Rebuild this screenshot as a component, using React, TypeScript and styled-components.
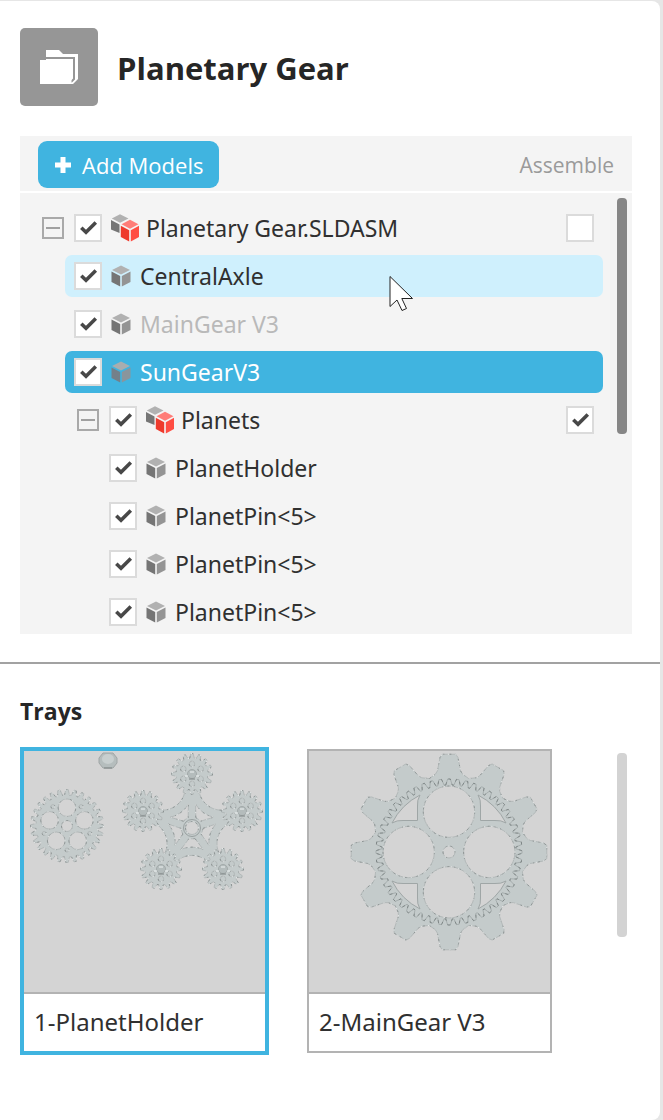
import React from "react";
import styled, { createGlobalStyle, css } from "styled-components";

const GlobalStyle = createGlobalStyle`
  *, *::before, *::after { box-sizing: border-box; }
  body {
    margin: 0;
    background: #e6e6e6;
    color: #262626;
    font-family: "Open Sans", "Noto Sans", sans-serif;
  }
`;

const Panel = styled.main`
  min-height: calc(100vh - 1px);
  margin: 1px 3px 0 0;
  background: #fff;
  border-radius: 0 8px 8px 0;
`;

const Header = styled.header`
  display: flex;
  align-items: center;
  gap: 19px;
  padding: 27px 28px 30px 20px;
`;

const ProjectBadge = styled.span`
  display: grid;
  flex: none;
  width: 78px;
  height: 78px;
  border-radius: 5px;
  background: #969696;
`;

const Title = styled.h1`
  margin: 0;
  padding-top: 2px;
  font-size: 31px;
  line-height: 40px;
  font-weight: 700;
`;

const Models = styled.section`
  margin: 0 28px 28px 20px;
  background: #f4f4f4;
`;

const Toolbar = styled.div`
  display: flex;
  align-items: center;
  justify-content: space-between;
  height: 57px;
  padding: 2px 18px 0;
  border-bottom: 2px solid #fff;
  color: #9a9a9a;
  font-size: 21px;
`;

const AddButton = styled.button`
  display: flex;
  align-items: center;
  gap: 10px;
  height: 47px;
  padding: 0 16px;
  border: 0;
  border-radius: 9px;
  background: #40b4e0;
  color: #fff;
  font: inherit;
  font-size: 22px;
`;

const TreeArea = styled.div`
  display: flex;
  gap: 14px;
  padding: 5px 5px 1px 0;
`;

const Tree = styled.ul`
  display: flex;
  flex: 1;
  flex-direction: column;
  gap: 6px;
  min-width: 0;
  margin: 0;
  padding: 9px 0 0;
  list-style: none;
  color: #303030;
  font-family: "Noto Sans", "Open Sans", sans-serif;
`;

const ScrollThumb = styled.div<{ $length: number; $color: string }>`
  flex: none;
  width: 10px;
  height: ${(p) => p.$length}px;
  border-radius: 4px;
  background: ${(p) => p.$color};
`;

type RowState = "normal" | "hover" | "muted" | "selected";

const rowLook = {
  normal: css``,
  hover: css`background: #cff0fd;`,
  muted: css`color: #b9b9b9;`,
  selected: css`background: #40b4e0; color: #fff;`,
};

const Row = styled.li<{ $level: number; $folder: boolean; $state: RowState }>`
  position: relative;
  display: flex;
  align-items: center;
  gap: 9px;
  height: 42px;
  margin-left: ${(p) => (p.$folder ? 22 : 10) + p.$level * 35}px;
  padding: 0 9px 0 ${(p) => (p.$folder ? 0 : 9)}px;
  border-radius: 7px;
  ${(p) => rowLook[p.$state]}
`;

const RowLabel = styled.label`
  display: flex;
  flex: 1;
  align-items: center;
  gap: 7px;
  font-size: 23px;
  line-height: 30px;
  white-space: nowrap;
`;

const Toggle = styled.button`
  display: grid;
  flex: none;
  place-items: center;
  width: 22px;
  height: 22px;
  margin-right: 1px;
  padding: 0;
  border: 2px solid #a9a9a9;
  background: transparent;

  &::before {
    content: "";
    width: 14px;
    height: 2px;
    background: #a0a0a0;
  }
`;

const Tick = styled.span`
  display: grid;
  flex: none;
  width: 28px;
  height: 28px;

  > * { grid-area: 1 / 1; }
  > svg { pointer-events: none; visibility: hidden; }
  > input:checked + svg { visibility: visible; }
`;

const TickBox = styled.input`
  appearance: none;
  width: 28px;
  height: 28px;
  margin: 0;
  border: 2px solid #dbdbdb;
  background: #fff;
`;

const Pointer = styled.svg`
  position: absolute;
  left: 324px;
  top: 20px;
`;

const Trays = styled.section`
  padding: 30px 33px 65px 20px;
  border-top: 2px solid #a2a2a2;
`;

const TraysTitle = styled.h2`
  margin: 0 0 21px;
  font-size: 23px;
  line-height: 34px;
  font-weight: 700;
`;

const TrayArea = styled.div`
  display: flex;
  gap: 65px;
`;

const TrayGrid = styled.div`
  display: grid;
  flex: 1;
  grid-template-columns: 1fr 1fr;
  gap: 40px;
  padding-left: 2px;
`;

const TrayCard = styled.button<{ $selected?: boolean }>`
  display: flex;
  flex-direction: column;
  padding: 0;
  border: 2px solid ${(p) => (p.$selected ? "#40b4e0" : "#b3b3b3")};
  outline: ${(p) => (p.$selected ? "2px solid #40b4e0" : "none")};
  background: #fff;
  color: #303030;
  font: inherit;
  font-family: "Noto Sans", "Open Sans", sans-serif;
  text-align: left;

  > svg { display: block; width: 100%; background: #d4d4d4; }
`;

const TrayName = styled.span`
  align-self: stretch;
  padding: 13px 10px 14px;
  border-top: 2px solid #b3b3b3;
  font-size: 24px;
  line-height: 30px;
  white-space: nowrap;
`;

const TrayThumbSlot = styled.div`
  padding-top: 4px;
`;

function FolderIcon() {
  return (
    <svg viewBox="0 0 78 78" aria-hidden="true">
      <path d="M26 22h13l4 4h15v25l-5 5h-2V32H26z" fill="#fff" />
      <path d="M26 30H54V51l-3 3" fill="none" stroke="#969696" strokeWidth="2" />
      <path d="M20 32h31.500v24H20z" fill="#fff" />
    </svg>
  );
}

function PlusIcon() {
  return (
    <svg width="18" height="18" viewBox="0 0 18 18" aria-hidden="true">
      <path d="M9 1v16M1 9h16" stroke="#fff" strokeWidth="5" />
    </svg>
  );
}

function PartIcon({ dimmed }: { dimmed?: boolean }) {
  return (
    <svg width="22" height="22" viewBox="0 0 22 22" aria-hidden="true">
      <path d="M10 0.500 19 5 10 9.500 1 5z" fill={dimmed ? "#a9adaf" : "#b1b1b1"} />
      <path d="M0.500 6.500 9.200 11v10.500L0.500 17z" fill={dimmed ? "#74808a" : "#757575"} />
      <path d="M19.500 6.500 10.800 11v10.500L19.500 17z" fill={dimmed ? "#8a959c" : "#949494"} />
    </svg>
  );
}

function AssemblyIcon() {
  return (
    <svg width="28" height="28" viewBox="0 0 28 28" aria-hidden="true">
      <path d="M9 0.300 17.500 4.500 9 8.800 0.800 4.500z" fill="#b1b1b1" />
      <path d="M0 6 8.500 10.500V19L0 15.500z" fill="#757575" />
      <path d="M19 5.800 27.500 10.300 19 14.800 10.500 10.300z" fill="#ff7d78" />
      <path d="M9.800 11.800 18.200 16.200V27.500L9.800 23z" fill="#ee3a2c" />
      <path d="M28 11.800 19.800 16.200V27.500L28 23z" fill="#ff4d43" />
    </svg>
  );
}

function Check({ id, label, on }: { id?: string; label?: string; on: boolean }) {
  return (
    <Tick>
      <TickBox type="checkbox" id={id} aria-label={label} defaultChecked={on} />
      <svg width="28" height="28" viewBox="0 0 28 28" aria-hidden="true">
        <path d="M7.300 13.800 12 18.200 21.800 8.500" fill="none" stroke="#484848" strokeWidth="3.600" />
      </svg>
    </Tick>
  );
}

type Item = {
  name: string;
  level: number;
  folder?: boolean;
  state?: RowState;
  assemble?: boolean;
};

const items: Item[] = [
  { name: "Planetary Gear.SLDASM", level: 0, folder: true, assemble: false },
  { name: "CentralAxle", level: 1, state: "hover" },
  { name: "MainGear V3", level: 1, state: "muted" },
  { name: "SunGearV3", level: 1, state: "selected" },
  { name: "Planets", level: 1, folder: true, assemble: true },
  { name: "PlanetHolder", level: 2 },
  { name: "PlanetPin<5>", level: 2 },
  { name: "PlanetPin<5>", level: 2 },
  { name: "PlanetPin<5>", level: 2 },
];

function TreeRow({ item, index }: { item: Item; index: number }) {
  const { name, level, folder = false, state = "normal", assemble } = item;
  const id = `model-${index}`;
  return (
    <Row $level={level} $folder={folder} $state={state}>
      {folder && <Toggle type="button" aria-label={`Collapse ${name}`} />}
      <Check id={id} on />
      <RowLabel htmlFor={id}>
        {folder ? <AssemblyIcon /> : <PartIcon dimmed={state === "selected"} />}
        {name}
      </RowLabel>
      {assemble !== undefined && <Check label={`Assemble ${name}`} on={assemble} />}
      {state === "hover" && (
        <Pointer width="26" height="38" viewBox="0 0 26 38" aria-hidden="true">
          <path
            d="M1 1.500V31.500L8 25 13 35.500 17.500 33.500 12.800 23.500H23.500z"
            fill="#fff"
            stroke="#222"
            strokeWidth="1"
          />
        </Pointer>
      )}
    </Row>
  );
}

const polar = (r: number, a: number) =>
  `${(r * Math.cos(a)).toFixed(2)} ${(r * Math.sin(a)).toFixed(2)}`;

/** Outline of a gear around the origin; `profile` lists [share of the pitch, radius]. */
function gearPath(teeth: number, profile: [number, number][]) {
  const pitch = (Math.PI * 2) / teeth;
  const points: string[] = [];
  for (let i = 0; i < teeth; i++) {
    for (const [share, r] of profile) {
      points.push(polar(r, -Math.PI / 2 + (i + share) * pitch));
    }
  }
  return `M${points.join("L")}Z`;
}

const circle = (x: number, y: number, r: number) =>
  `M${x - r} ${y}a${r} ${r} 0 1 0 ${2 * r} 0a${r} ${r} 0 1 0 ${-2 * r} 0z`;

/** Circles spread evenly on a ring, the first one at the top. */
function ringOfHoles(count: number, distance: number, r: number) {
  let d = "";
  for (let i = 0; i < count; i++) {
    const a = -Math.PI / 2 + (i * Math.PI * 2) / count;
    d += circle(distance * Math.cos(a), distance * Math.sin(a), r);
  }
  return d;
}

const spurProfile = (tip: number, root: number): [number, number][] => [
  [-0.36, root],
  [-0.14, tip],
  [0.14, tip],
  [0.36, root],
];

/** A flat machined face: soft rim, with broken dark and light glints along it. */
function Shape({ d }: { d: string }) {
  return (
    <>
      <path d={d} fill="#c4cbcb" fillRule="evenodd" stroke="#b3b9b9" strokeWidth="1" strokeLinejoin="round" />
      <path d={d} fill="none" stroke="#7d8484" strokeWidth="0.700" strokeDasharray="2 4 1 5" />
      <path d={d} fill="none" stroke="#f0f3f3" strokeWidth="0.800" strokeDasharray="1.500 6" strokeDashoffset="3" />
    </>
  );
}

const planetPath = gearPath(16, spurProfile(20.5, 16));
const sunPath =
  gearPath(28, spurProfile(36.5, 31)) + ringOfHoles(5, 18.3, 8.8) + circle(0, 0, 5.5);

const fifth = (i: number) => -Math.PI / 2 + (i * Math.PI * 2) / 5;

function carrierPath() {
  let d = "";
  for (let i = 0; i < 5; i++) {
    const a = fifth(i);
    const b = fifth(i + 1);
    d += `${i ? "L" : "M"}${polar(42, a - 0.16)}L${polar(42, a + 0.16)}`;
    d += `C${polar(26, a + 0.24)} ${polar(26, b - 0.24)} ${polar(42, b - 0.16)}`;
  }
  d += "Z";
  for (let i = 0; i < 5; i++) {
    const a = fifth(i);
    const b = fifth(i + 1);
    const mid = (a + b) / 2;
    d += `M${polar(11, a + 0.35)}L${polar(24, a + 0.15)}Q${polar(17, mid)} ${polar(24, b - 0.15)}L${polar(11, b - 0.35)}Q${polar(11, mid)} ${polar(11, a + 0.35)}Z`;
  }
  return d + circle(0, 0, 6.5);
}

const planetSpots = [
  [168, 23],
  [119, 60],
  [218, 60],
  [137, 118],
  [199, 118],
];

function PlanetTray() {
  return (
    <svg viewBox="0 0 241 241" aria-hidden="true">
      <path d="M79 2h10l4 5v5l-4 5H79l-4-5V7z" fill="#b5bdbd" stroke="#a0a6a6" />
      <ellipse cx="84" cy="8" rx="6" ry="5" fill="#c8cfcf" />
      <path d="M80 17h8" stroke="#7b8282" />
      <g transform="translate(43 75)">
        <Shape d={sunPath} />
        <Shape d={ringOfHoles(5, -24, 2)} />
      </g>
      <g transform="translate(168 77)">
        <Shape d={carrierPath()} />
        <circle r="8.500" fill="none" stroke="#9aa1a1" />
      </g>
      {planetSpots.map(([x, y]) => (
        <g key={`${x}-${y}`} transform={`translate(${x} ${y})`}>
          <Shape d={planetPath} />
          <Shape d={ringOfHoles(6, 10, 2.8)} />
          <circle r="4.500" fill="#b4bcbc" stroke="#a3aaaa" />
          <path d="M-7 2h3M4 2h3M-2 -2h4" stroke="#eef2f2" />
          <path d="M-3 5h6" stroke="#7d8484" />
        </g>
      ))}
    </svg>
  );
}

const mainPath =
  gearPath(12, [
    [-0.5, 76],
    [-0.33, 79],
    [-0.27, 82],
    [-0.18, 95],
    [-0.13, 98],
    [0.13, 98],
    [0.18, 95],
    [0.27, 82],
    [0.33, 79],
  ]) +
  ringOfHoles(4, 40.3, 25.7) +
  circle(0, 0, 6);

const meshPath = gearPath(52, [
  [-0.4, 67],
  [-0.15, 73],
  [0.15, 73],
  [0.4, 67],
]);

function MainTray() {
  return (
    <svg viewBox="0 0 241 241" aria-hidden="true">
      <g transform="translate(140 101)">
        <Shape d={mainPath} />
        <path d={meshPath} fill="none" stroke="#a3aaaa" strokeWidth="0.900" strokeLinejoin="round" />
        <path d={meshPath} fill="none" stroke="#6f7676" strokeWidth="0.700" strokeDasharray="3 4" />
        {[0, 90, 180, 270].map((angle) => (
          <path
            key={angle}
            transform={`rotate(${angle})`}
            d="M29 -57Q32 -52 31.500 -46V-31.500H46Q52 -32 57 -29A65 65 0 0 0 29 -57Z"
            fill="#d4d4d4"
            stroke="#9fa6a6"
          />
        ))}
      </g>
    </svg>
  );
}

export default function App() {
  return (
    <>
      <GlobalStyle />
      <Panel>
        <Header>
          <ProjectBadge>
            <FolderIcon />
          </ProjectBadge>
          <Title>Planetary Gear</Title>
        </Header>
        <Models>
          <Toolbar>
            <AddButton type="button">
              <PlusIcon />
              Add Models
            </AddButton>
            <span>Assemble</span>
          </Toolbar>
          <TreeArea>
            <Tree>
              {items.map((item, i) => (
                <TreeRow key={i} item={item} index={i} />
              ))}
            </Tree>
            <ScrollThumb $length={236} $color="#868686" />
          </TreeArea>
        </Models>
        <Trays>
          <TraysTitle>Trays</TraysTitle>
          <TrayArea>
            <TrayGrid>
              <TrayCard type="button" $selected>
                <PlanetTray />
                <TrayName>1-PlanetHolder</TrayName>
              </TrayCard>
              <TrayCard type="button">
                <MainTray />
                <TrayName>2-MainGear V3</TrayName>
              </TrayCard>
            </TrayGrid>
            <TrayThumbSlot>
              <ScrollThumb $length={184} $color="#d3d3d3" />
            </TrayThumbSlot>
          </TrayArea>
        </Trays>
      </Panel>
    </>
  );
}
